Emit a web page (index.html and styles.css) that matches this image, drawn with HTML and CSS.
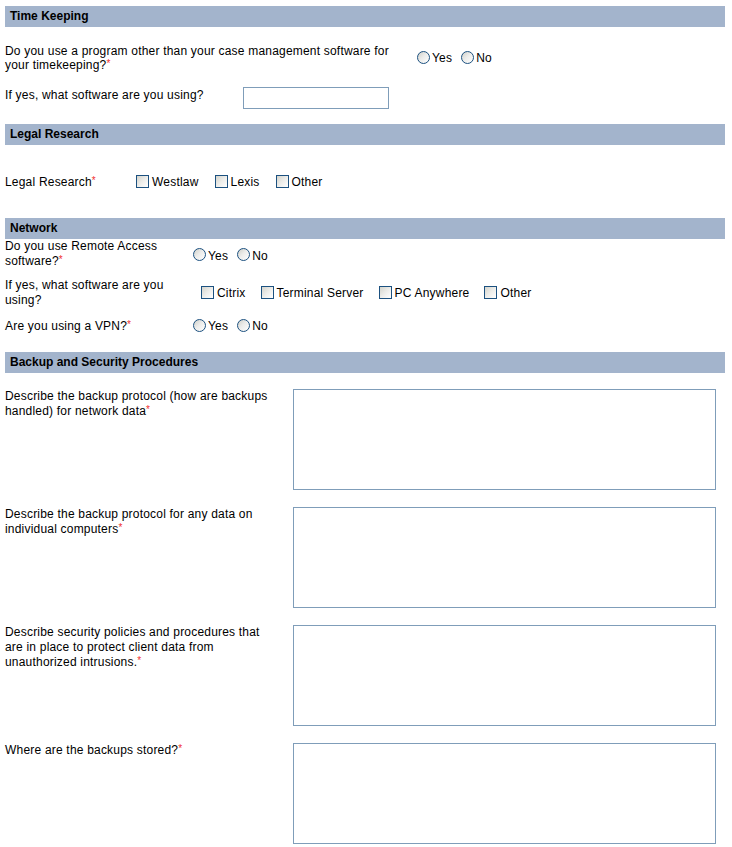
FILE: index.html
```html
<!DOCTYPE html>
<html>
<head>
<meta charset="utf-8">
<title>Questionnaire</title>
<link rel="stylesheet" href="styles.css">
</head>
<body>
<div class="page">

  <div class="sec-head">Time Keeping</div>
  <div class="row tk-1">
    <div class="label w400">Do you use a program other than your case management software for your timekeeping?<span class="req">*</span></div>
    <div class="opts ml12">
      <span class="opt"><span class="radio"></span>Yes</span>
      <span class="opt"><span class="radio"></span>No</span>
    </div>
  </div>
  <div class="row tk-2">
    <div class="label w238 pt1">If yes, what software are you using?</div>
    <div class="textbox"></div>
  </div>

  <div class="sec-head lr-head">Legal Research</div>
  <div class="row lr-1">
    <div class="label w131">Legal Research<span class="req">*</span></div>
    <div class="opts">
      <span class="opt cb"><span class="check"></span>Westlaw</span>
      <span class="opt cb"><span class="check"></span>Lexis</span>
      <span class="opt cb"><span class="check"></span>Other</span>
    </div>
  </div>

  <div class="sec-head nw-head">Network</div>
  <div class="row nw-1">
    <div class="label w185 lh15">Do you use Remote Access software?<span class="req">*</span></div>
    <div class="opts ml3">
      <span class="opt"><span class="radio"></span>Yes</span>
      <span class="opt"><span class="radio"></span>No</span>
    </div>
  </div>
  <div class="row nw-2">
    <div class="label w185 lh15">If yes, what software are you using?</div>
    <div class="opts ml11">
      <span class="opt cb2"><span class="check"></span>Citrix</span>
      <span class="opt cb2"><span class="check"></span>Terminal Server</span>
      <span class="opt cb2"><span class="check"></span>PC Anywhere</span>
      <span class="opt cb2"><span class="check"></span>Other</span>
    </div>
  </div>
  <div class="row nw-3">
    <div class="label w185">Are you using a VPN?<span class="req">*</span></div>
    <div class="opts ml3">
      <span class="opt"><span class="radio"></span>Yes</span>
      <span class="opt"><span class="radio"></span>No</span>
    </div>
  </div>

  <div class="sec-head bk-head">Backup and Security Procedures</div>
  <div class="bk-list">
    <div class="bk-row">
      <div class="bk-label">Describe the backup protocol (how are backups handled) for network data<span class="req">*</span></div>
      <div class="textarea"></div>
    </div>
    <div class="bk-row">
      <div class="bk-label">Describe the backup protocol for any data on individual computers<span class="req">*</span></div>
      <div class="textarea"></div>
    </div>
    <div class="bk-row">
      <div class="bk-label">Describe security policies and procedures that are in place to protect client data from unauthorized intrusions.<span class="req">*</span></div>
      <div class="textarea"></div>
    </div>
    <div class="bk-row">
      <div class="bk-label">Where are the backups stored?<span class="req">*</span></div>
      <div class="textarea"></div>
    </div>
  </div>

</div>
</body>
</html>
```

FILE: styles.css
```css
html, body {
  margin: 0;
  padding: 0;
  background: #ffffff;
}

body {
  font-family: "Liberation Sans", Arial, sans-serif;
  font-size: 12px;
  line-height: 14px;
  letter-spacing: 0.2px;
  color: #000000;
}

.page {
  width: 720px;
  margin-left: 5px;
  padding-top: 6px;
}

.sec-head {
  height: 21px;
  line-height: 21px;
  background: #a3b4cc;
  font-weight: bold;
  letter-spacing: 0;
  padding-left: 5px;
}

.row {
  display: flex;
  align-items: center;
}

.label {
  flex: none;
}

.lh15 { line-height: 15px; }

.w400 { width: 400px; }
.w238 { width: 238px; }
.w131 { width: 131px; }
.w185 { width: 185px; }
.pt1 { padding-top: 1px; }

.ml12 { margin-left: 12px; }
.ml3 { margin-left: 3px; }
.ml11 { margin-left: 11px; }

.req {
  color: #f03030;
  font-size: 10px;
  line-height: 0;
  vertical-align: 2px;
  letter-spacing: 0;
}

.opts {
  display: flex;
  align-items: center;
}

.nw-1 .opts { margin-top: 3px; }

.opt {
  display: inline-flex;
  align-items: center;
  margin-right: 9px;
}

.opt.cb { margin-right: 16px; }
.opt.cb2 { margin-right: 15px; }

.radio {
  width: 13px;
  height: 13px;
  box-sizing: border-box;
  border: 1px solid #1c5180;
  border-radius: 50%;
  background: linear-gradient(135deg, #cfcfc8 0%, #ececea 45%, #ffffff 100%);
  margin-right: 2px;
  margin-top: -2px;
}

.check {
  width: 13px;
  height: 13px;
  box-sizing: border-box;
  border: 1px solid #1c5180;
  background: linear-gradient(135deg, #d4d4cc 0%, #ededea 50%, #ffffff 100%);
  margin-right: 3px;
  margin-top: -1px;
}

.tk-1 { margin-top: 17px; }
.tk-2 {
  margin-top: 15px;
  align-items: flex-start;
}

.textbox {
  width: 146px;
  height: 22px;
  box-sizing: border-box;
  border: 1px solid #7f9db9;
  background: #ffffff;
}

.lr-head { margin-top: 15px; }
.lr-1 { margin-top: 30px; }

.nw-head { margin-top: 29px; }
.nw-1 { margin-top: 0; }
.nw-2 { margin-top: 9px; }
.nw-3 { margin-top: 11px; }

.bk-head { margin-top: 19px; }

.bk-list {
  display: flex;
  flex-direction: column;
  gap: 17px;
  margin-top: 16px;
}

.bk-row {
  display: flex;
  align-items: flex-start;
}

.bk-label {
  flex: none;
  width: 272px;
  margin-right: 16px;
  line-height: 15px;
}

.textarea {
  width: 423px;
  height: 101px;
  box-sizing: border-box;
  border: 1px solid #7f9db9;
  background: #ffffff;
}
```
